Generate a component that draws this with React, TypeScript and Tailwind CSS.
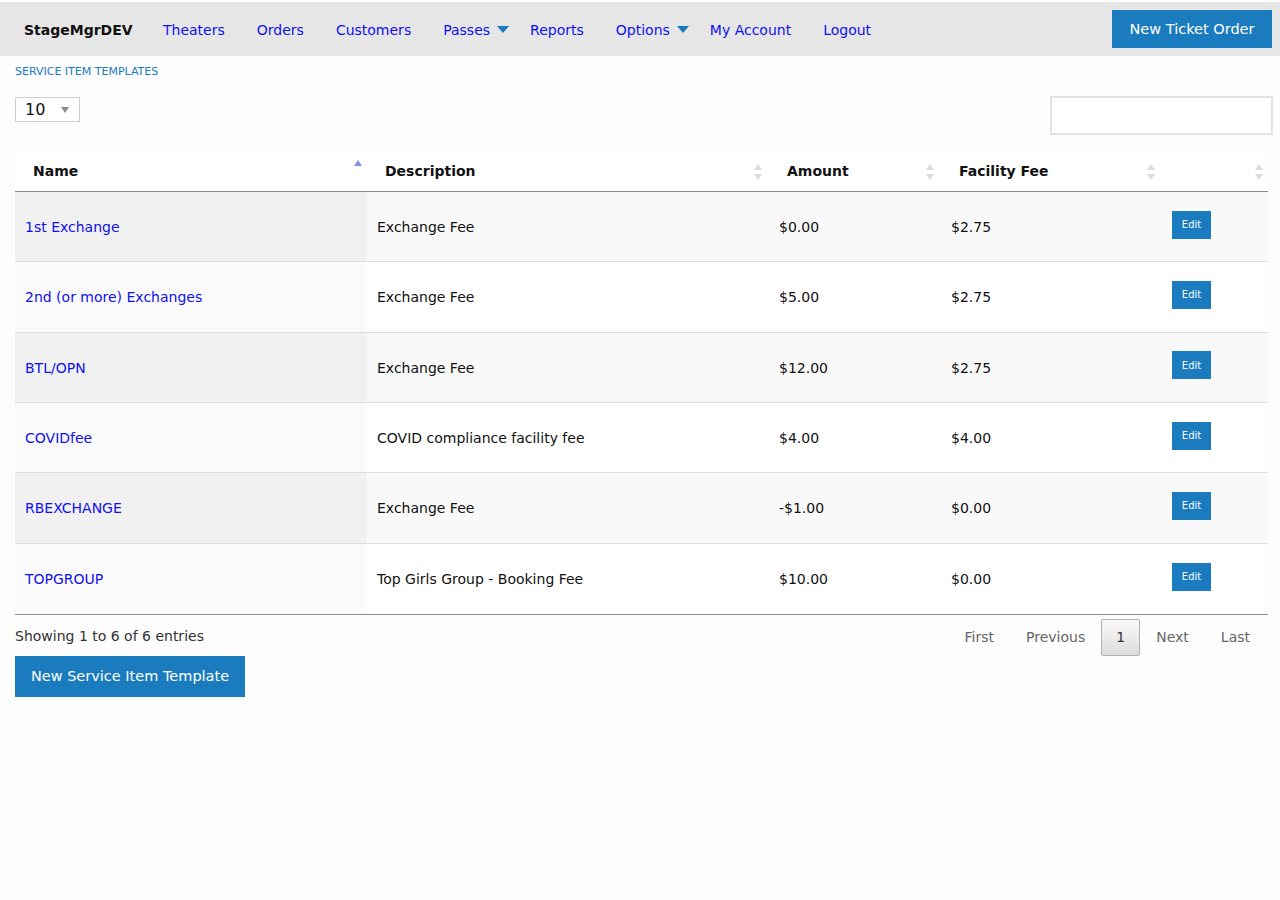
import React from "react";

const rows = [
  { name: "1st Exchange", desc: "Exchange Fee", amount: "$0.00", fee: "$2.75" },
  { name: "2nd (or more) Exchanges", desc: "Exchange Fee", amount: "$5.00", fee: "$2.75" },
  { name: "BTL/OPN", desc: "Exchange Fee", amount: "$12.00", fee: "$2.75" },
  { name: "COVIDfee", desc: "COVID compliance facility fee", amount: "$4.00", fee: "$4.00" },
  { name: "RBEXCHANGE", desc: "Exchange Fee", amount: "-$1.00", fee: "$0.00" },
  { name: "TOPGROUP", desc: "Top Girls Group - Booking Fee", amount: "$10.00", fee: "$0.00" },
];

const cols = "grid grid-cols-[352px_400px_172px_221px_108px]";

function Caret() {
  return (
    <svg width="12" height="8" viewBox="0 0 12 8" className="ml-[7px] -mt-[2px]">
      <path d="M0 0 L12 0 L6 7 Z" fill="#1a7bbf" />
    </svg>
  );
}

function SortBoth() {
  return (
    <svg width="8" height="16" viewBox="0 0 8 16">
      <path d="M0 6 L8 6 L4 0 Z" fill="#dcdcdc" />
      <path d="M0 10 L8 10 L4 16 Z" fill="#dcdcdc" />
    </svg>
  );
}

function SortUp() {
  return (
    <svg width="8" height="16" viewBox="0 0 8 16">
      <path d="M0 6 L8 6 L4 0 Z" fill="#8a8ee0" />
    </svg>
  );
}

function HeadCell({ label, sorted, pl }: { label: string; sorted?: boolean; pl: string }) {
  return (
    <div className={`flex items-center justify-between ${pl} pr-[5px]`}>
      <span className="font-bold text-[14px] text-[#111]">{label}</span>
      <span className={sorted ? "-mt-[8px]" : ""}>{sorted ? <SortUp /> : <SortBoth />}</span>
    </div>
  );
}

export default function App() {
  return (
    <div className="min-h-[900px] bg-[#fdfdfd] pt-[2px] font-['DejaVu_Sans',sans-serif] text-[14px] text-[#111]">
      {/* top navigation */}
      <nav className="flex h-[54px] items-center bg-[#e6e6e6]">
        <div className="w-[147px] pl-6 pt-[3px] font-bold text-[14px] text-[#111]">StageMgrDEV</div>
        <a className="px-4 pt-[3px] text-[#1010ee]">Theaters</a>
        <a className="px-4 pt-[3px] text-[#1010ee]">Orders</a>
        <a className="px-4 pt-[3px] text-[#1010ee]">Customers</a>
        <a className="flex items-center pl-4 pr-[5px] pt-[3px] text-[#1010ee]">
          Passes
          <Caret />
        </a>
        <a className="px-4 pt-[3px] text-[#1010ee]">Reports</a>
        <a className="flex items-center pl-4 pr-[5px] pt-[3px] text-[#1010ee]">
          Options
          <Caret />
        </a>
        <a className="px-4 pt-[3px] text-[#1010ee]">My Account</a>
        <a className="px-4 pt-[3px] text-[#1010ee]">Logout</a>
        <button className="ml-auto mr-2 h-[38px] w-[160px] pt-[2px] bg-[#1a7bbf] text-[14.5px] text-white">
          New Ticket Order
        </button>
      </nav>

      <div className="px-[15px]">
        <div className="mt-[9px] text-[11px] leading-[14px] text-[#1a7bbf]">SERVICE ITEM TEMPLATES</div>

        <div className="mt-[10px] flex items-start justify-between">
          <div className="mt-[8px] flex h-[25px] w-[65px] items-center justify-between border border-[#cfcfcf] bg-white pl-[9px] pr-[10px]">
            <span className="text-[16px] text-[#111]">10</span>
            <svg width="8" height="6" viewBox="0 0 8 6">
              <path d="M0 0 L8 0 L4 6 Z" fill="#8a8a8a" />
            </svg>
          </div>
          <div className="-mr-[8px] mt-[7px] h-[39px] w-[223px] border-2 border-[#e2e2e2] bg-white" />
        </div>

        {/* table */}
        <div className="mt-[17px] w-[1253px]">
          <div className={`${cols} h-[40px] border-b border-[#8c8c8c] bg-white`}>
            <HeadCell label="Name" sorted pl="pl-[18px]" />
            <HeadCell label="Description" pl="pl-[18px]" />
            <HeadCell label="Amount" pl="pl-[20px]" />
            <HeadCell label="Facility Fee" pl="pl-[20px]" />
            <HeadCell label="" pl="pl-[20px]" />
          </div>
          {rows.map((r, i) => {
            const odd = i % 2 === 0;
            return (
              <div
                key={r.name}
                className={`${cols} h-[70.33px] ${i < rows.length - 1 ? "border-b border-[#dedede]" : ""} ${
                  odd ? "bg-[#f9f9f9]" : "bg-white"
                }`}
              >
                <div className={`flex items-center pl-[10px] pt-[2px] ${odd ? "bg-[#f1f1f1]" : "bg-[#fafafa]"}`}>
                  <a className="text-[#1010ee]">{r.name}</a>
                </div>
                <div className="flex items-center pl-[10px] pt-[2px]">{r.desc}</div>
                <div className="flex items-center pl-[12px] pt-[2px]">{r.amount}</div>
                <div className="flex items-center pl-[12px] pt-[2px]">{r.fee}</div>
                <div className="flex items-center pl-[12px]">
                  <button className="mb-[4px] h-[28px] w-[39px] bg-[#1a7bbf] text-[10px] text-white">Edit</button>
                </div>
              </div>
            );
          })}
          <div className="border-t border-[#8c8c8c]" />
        </div>

        <div className="flex w-[1253px] items-start justify-between">
          <div className="mt-[11px] text-[14px] text-[#333]">Showing 1 to 6 of 6 entries</div>
          <div className="mt-[4px] flex items-center text-[14px] text-[#666]">
            <span className="px-[16px]">First</span>
            <span className="px-[16px]">Previous</span>
            <span className="flex h-[37px] w-[39px] items-center justify-center rounded-[2px] border border-[#b0b0b0] bg-gradient-to-b from-[#fafafa] to-[#dcdcdc] text-[#333]">
              1
            </span>
            <span className="px-[16px]">Next</span>
            <span className="pl-[16px] pr-[18px]">Last</span>
          </div>
        </div>

        <button className="mt-0 h-[41px] w-[230px] bg-[#1a7bbf] text-[14.5px] text-white">
          New Service Item Template
        </button>
      </div>
    </div>
  );
}
